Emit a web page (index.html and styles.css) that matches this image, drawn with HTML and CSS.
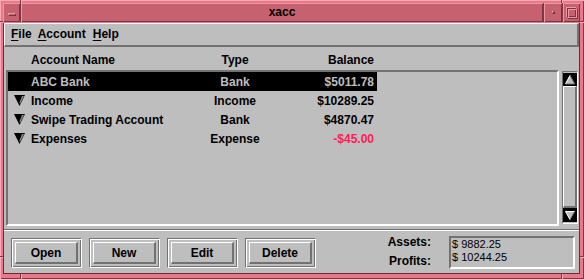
FILE: index.html
```html
<html>
	<head>
		<meta charset="UTF-8">
		<link rel="stylesheet" href="styles.css">
	</head>
	<body>
		<div class="window">
			<div class="notch nt-tl"></div>
			<div class="notch nt-tr"></div>
			<div class="notch nl-tl"></div>
			<div class="notch nl-bl"></div>
			<div class="notch nr-tr"></div>
			<div class="notch nr-br"></div>
			<div class="notch nb-bl"></div>
			<div class="notch nb-br"></div>

			<div class="titlebar">
				<div class="tb-btn menu-btn"><span class="dash"></span></div>
				<div class="title">xacc</div>
				<div class="tb-btn min-btn"><span class="dot"></span></div>
				<div class="tb-btn max-btn"><span class="square"></span></div>
			</div>

			<div class="panel">
				<div class="menubar">
					<span><u>F</u>ile</span>
					<span class="m-account"><u>A</u>ccount</span>
					<span class="m-help"><u>H</u>elp</span>
				</div>

				<div class="main">
					<div class="row header">
						<div class="c-name"><span class="tri-space"></span>Account Name</div>
						<div class="c-type">Type</div>
						<div class="c-bal">Balance</div>
					</div>
					<div class="listarea">
						<div class="listbox">
							<div class="row selected">
								<div class="c-name"><span class="tri-space"></span>ABC Bank</div>
								<div class="c-type">Bank</div>
								<div class="c-bal">$5011.78</div>
							</div>
							<div class="row">
								<div class="c-name">
									<svg class="tri" width="11" height="11" viewBox="0 0 11 11"><polygon points="0,0 11,0 5.5,11" fill="#000"/><polygon points="8,1 10,1 6,9 5.5,7.5" fill="#8c8c8c"/></svg>
									Income
								</div>
								<div class="c-type">Income</div>
								<div class="c-bal">$10289.25</div>
							</div>
							<div class="row">
								<div class="c-name">
									<svg class="tri" width="11" height="11" viewBox="0 0 11 11"><polygon points="0,0 11,0 5.5,11" fill="#000"/><polygon points="8,1 10,1 6,9 5.5,7.5" fill="#8c8c8c"/></svg>
									Swipe Trading Account
								</div>
								<div class="c-type">Bank</div>
								<div class="c-bal">$4870.47</div>
							</div>
							<div class="row">
								<div class="c-name">
									<svg class="tri" width="11" height="11" viewBox="0 0 11 11"><polygon points="0,0 11,0 5.5,11" fill="#000"/><polygon points="8,1 10,1 6,9 5.5,7.5" fill="#8c8c8c"/></svg>
									Expenses
								</div>
								<div class="c-type">Expense</div>
								<div class="c-bal neg">-$45.00</div>
							</div>
						</div>
						<div class="scrollbar">
							<svg class="arrow" width="14" height="13" viewBox="0 0 14 13">
								<rect width="14" height="13" fill="#000"/>
								<polygon points="7,2 12,11 2,11" fill="#bebebe"/>
								<polyline points="2.5,11 7,2.5" stroke="#fff" stroke-width="1" fill="none"/>
								<polyline points="7,2.5 11.5,11 2.5,11" stroke="#727272" stroke-width="1" fill="none"/>
							</svg>
							<div class="slider"></div>
							<svg class="arrow" width="14" height="14" viewBox="0 0 14 14">
								<rect width="14" height="14" fill="#000"/>
								<polygon points="2,3 12,3 7,12" fill="#bebebe"/>
								<polyline points="2.5,3.5 11.5,3.5" stroke="#fff" stroke-width="1" fill="none"/>
								<polyline points="2.5,3.5 7,11.5" stroke="#fff" stroke-width="1" fill="none"/>
								<polyline points="11.5,3.5 7,11.5" stroke="#727272" stroke-width="1" fill="none"/>
							</svg>
						</div>
					</div>
				</div>

				<div class="separator"></div>

				<div class="bottom">
					<div class="buttons">
						<div class="btn-frame"><a class="btn">Open</a></div>
						<div class="btn-frame"><a class="btn">New</a></div>
						<div class="btn-frame"><a class="btn">Edit</a></div>
						<div class="btn-frame"><a class="btn">Delete</a></div>
					</div>
					<div class="totals">
						<div class="labels">
							<div>Assets:</div>
							<div>Profits:</div>
						</div>
						<div class="values">
							<div>$ 9882.25</div>
							<div>$ 10244.25</div>
						</div>
					</div>
				</div>
			</div>
		</div>
	</body>
</html>
```

FILE: styles.css
```css
body {
	margin: 0;
	background: #e8788a;
	font-family: "Liberation Sans", Arial, sans-serif;
	font-size: 12px;
	font-weight: bold;
	color: #000;
}
.window {
	position: relative;
	width: 584px;
	height: 279px;
	box-sizing: border-box;
	padding: 3px 4px 5px 3px;
	background: #e8788a;
	box-shadow: inset 1px 1px #ffa8b6, inset -1px -1px #7c3844;
	display: flex;
	flex-direction: column;
}

/* window manager frame */
.notch {
	position: absolute;
	background: #7c3844;
}
.nt-tl, .nt-tr, .nb-bl, .nb-br {
	width: 1px;
	height: 3px;
	border-right: solid 1px #ffa8b6;
}
.nt-tl { left: 20px; top: 0 }
.nt-tr { left: 561px; top: 0 }
.nb-bl { left: 20px; bottom: 0; height: 5px }
.nb-br { left: 561px; bottom: 0; height: 5px }
.nl-tl, .nl-bl, .nr-tr, .nr-br {
	width: 3px;
	height: 1px;
	border-bottom: solid 1px #ffa8b6;
}
.nl-tl { left: 0; top: 21px }
.nl-bl { left: 0; top: 256px }
.nr-tr { right: 0; top: 21px; width: 4px }
.nr-br { right: 0; top: 256px; width: 4px }

.titlebar {
	height: 19px;
	margin-bottom: 1px;
	display: flex;
	background: #7c3844;
}
.titlebar > div {
	background: #c6626f;
	box-shadow: inset 1px 1px #ee98a4, inset -1px -1px #7a3440;
	display: flex;
	align-items: center;
	justify-content: center;
}
.menu-btn { width: 17px }
.title {
	flex: 1;
	line-height: 19px;
	margin: 0 1px;
}
.min-btn { width: 18px; margin-right: 1px }
.max-btn { width: 17px }
.dash {
	width: 8px;
	height: 3px;
	box-sizing: border-box;
	border-top: solid 1px #ee98a4;
	border-left: solid 1px #ee98a4;
	border-bottom: solid 1px #7a3440;
	border-right: solid 1px #7a3440;
	margin-top: 3px;
}
.dot {
	width: 3px;
	height: 3px;
	box-sizing: border-box;
	border-top: solid 1px #ee98a4;
	border-left: solid 1px #ee98a4;
	border-bottom: solid 2px #7a3440;
	border-right: solid 2px #7a3440;
	margin-left: 1px;
}
.square {
	width: 10px;
	height: 10px;
	box-sizing: border-box;
	border-top: solid 1px #7a3440;
	border-left: solid 1px #7a3440;
	border-bottom: solid 1px #ee98a4;
	border-right: solid 1px #ee98a4;
	box-shadow: 1px 1px #7a3440, -1px -1px #ee98a4, inset 1px 1px #ee98a4, inset -1px -1px #7a3440;
	margin-left: 1px;
}

/* application */
.panel {
	flex: 1;
	background: #bebebe;
	border: solid 1px #6a2c36;
	border-top: none;
	display: flex;
	flex-direction: column;
}
.menubar {
	height: 24px;
	box-sizing: border-box;
	border-top: solid 1px #fff;
	border-left: solid 1px #fff;
	border-bottom: solid 2px #727272;
	border-right: solid 2px #727272;
	line-height: 21px;
	padding-left: 6px;
	display: flex;
}
.m-account { margin-left: 6px }
.m-help { margin-left: 7px }
.menubar u {
	text-underline-offset: 2px;
}
.main {
	padding-left: 2px;
}
.row {
	display: flex;
	height: 19px;
	line-height: 20px;
	width: 369px;
	white-space: nowrap;
}
.header {
	padding-top: 4px;
	padding-left: 2px;
	line-height: 19px;
}
.c-name {
	width: 187px;
	padding-left: 6px;
	box-sizing: border-box;
	display: flex;
	align-items: center;
	gap: 6px;
}
.tri-space, .tri {
	width: 11px;
	flex: none;
}
.c-type {
	width: 80px;
	text-align: center;
}
.c-bal {
	width: 102px;
	padding-right: 3px;
	box-sizing: border-box;
	text-align: right;
}
.neg { color: #ff2052 }
.selected {
	background: #000;
	color: #bebebe;
}
.listarea {
	display: flex;
	gap: 3px;
}
.listbox {
	width: 553px;
	height: 156px;
	box-sizing: border-box;
	border: solid 2px;
	border-color: #727272 #fff #fff #727272;
}
.scrollbar {
	width: 16px;
	height: 153px;
	margin-top: 1px;
	box-sizing: border-box;
	border: solid 1px;
	border-color: #727272 #fff #fff #727272;
	padding: 1px 0;
	display: flex;
	flex-direction: column;
}
.arrow {
	display: block;
	flex: none;
}
.slider {
	flex: 1;
	border-top: solid 1px #fff;
	border-left: solid 1px #fff;
	border-bottom: solid 2px #727272;
	border-right: solid 2px #727272;
}
.separator {
	margin-top: 3px;
	height: 0;
	border-top: solid 1px #727272;
	border-bottom: solid 1px #fff;
}
.bottom {
	flex: 1;
	display: flex;
	padding: 0 4px 0 7px;
}
.buttons {
	display: flex;
	gap: 7px;
	margin-top: 7px;
}
.btn-frame {
	width: 71px;
	height: 30px;
	box-sizing: border-box;
	border: solid 1px;
	border-color: #727272 #fff #fff #727272;
	box-shadow: inset 1px 1px #fff, inset -1px -1px #727272;
	padding: 3px;
}
.btn {
	display: block;
	height: 22px;
	box-sizing: border-box;
	border-top: solid 1px #fff;
	border-left: solid 1px #fff;
	border-bottom: solid 2px #727272;
	border-right: solid 2px #727272;
	line-height: 20px;
	text-align: center;
}
.totals {
	margin-left: auto;
	display: flex;
	gap: 18px;
}
.labels {
	margin-top: 2px;
	line-height: 19px;
	text-align: right;
}
.values {
	margin-top: 5px;
	width: 126px;
	height: 33px;
	box-sizing: border-box;
	border: solid 2px;
	border-color: #727272 #fff #fff #727272;
	padding: 0 1px;
	font-weight: normal;
	font-size: 11px;
	line-height: 13px;
}
```
